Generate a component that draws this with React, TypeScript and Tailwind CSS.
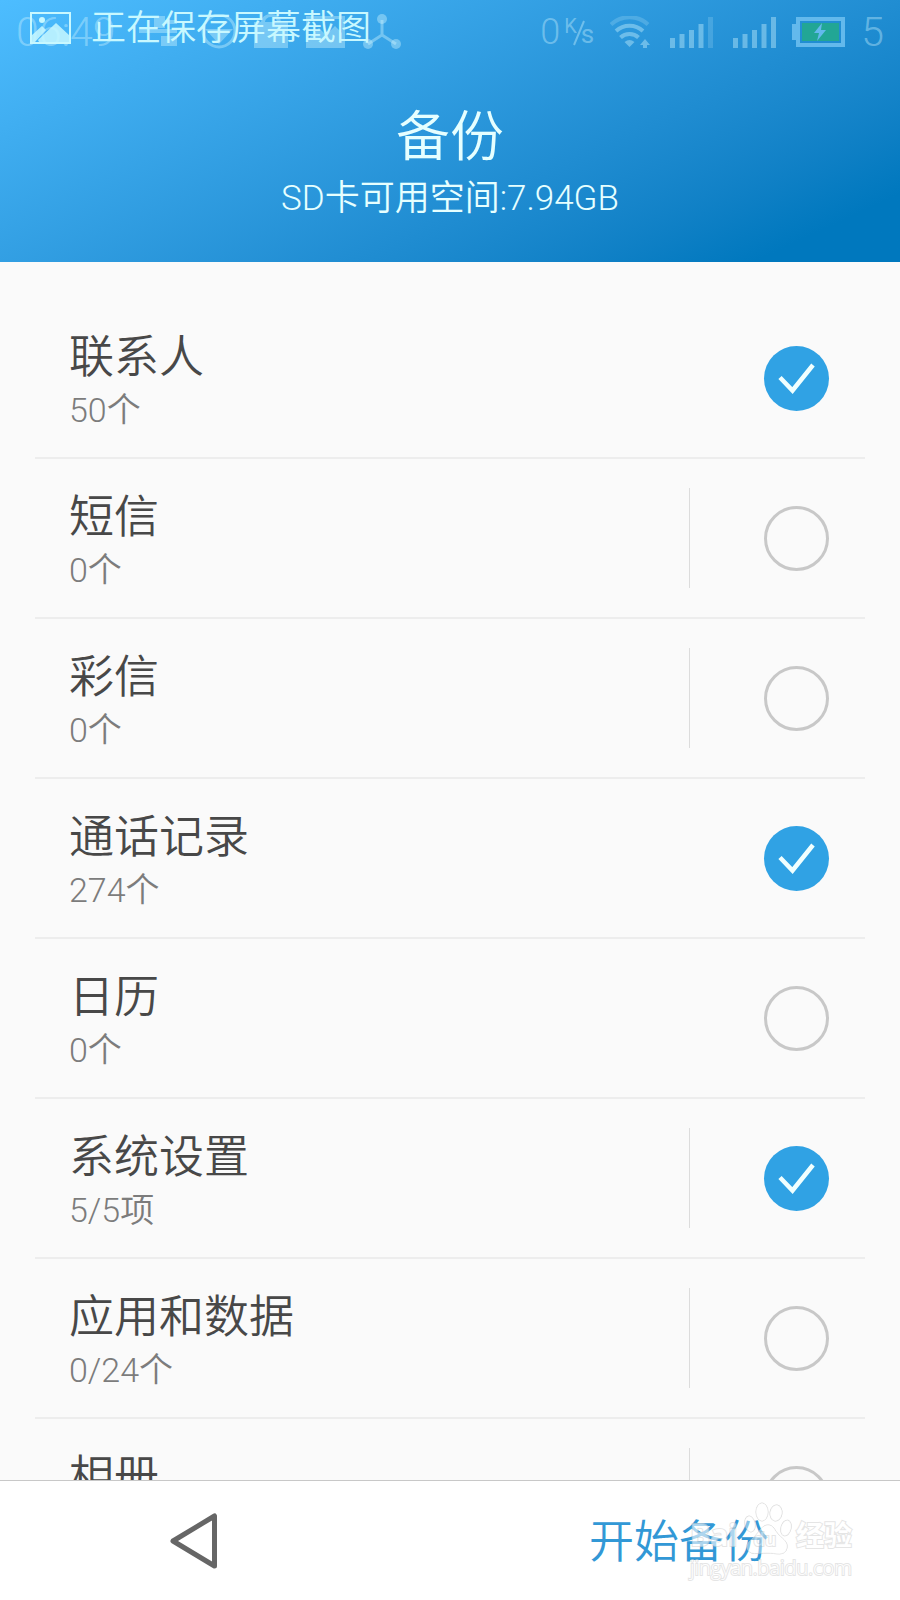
import { useState } from "react";

type Item = {
  id: string;
  title: string;
  detail: string;
  checked: boolean;
  divided: boolean;
};

const initialItems: Item[] = [
  { id: "contacts", title: "联系人", detail: "50个", checked: true, divided: false },
  { id: "sms", title: "短信", detail: "0个", checked: false, divided: true },
  { id: "mms", title: "彩信", detail: "0个", checked: false, divided: true },
  { id: "calls", title: "通话记录", detail: "274个", checked: true, divided: false },
  { id: "calendar", title: "日历", detail: "0个", checked: false, divided: false },
  { id: "settings", title: "系统设置", detail: "5/5项", checked: true, divided: true },
  { id: "apps", title: "应用和数据", detail: "0/24个", checked: false, divided: true },
  { id: "album", title: "相册", detail: "0个", checked: false, divided: true },
];

function NotificationIcons() {
  return (
    <svg viewBox="0 0 264 36" className="h-9 w-[264px]" fill="currentColor">
      {/* usb */}
      <path d="M15 2h11v4h12v4H26v4H15zM0 15h38v4H0zM22 22h16v10H22z" />
      {/* compass */}
      <circle cx="80" cy="17" r="16" fill="none" stroke="currentColor" strokeWidth="3" />
      <path d="M66 15h28L80 30z" />
      {/* bag */}
      <path d="M115 8h7a10 8 0 0 1 20 0h7v26h-34zM126 8h12a6 5 0 0 0-12 0z" fillRule="evenodd" />
      <path d="M167 2h39v32h-39zM170 5v19l10-10 7 7 9-9 7 7V5z" fillRule="evenodd" />
      {/* share nodes */}
      <path d="M243 6v15l-14 9M243 21l14 9" fill="none" stroke="currentColor" strokeWidth="3" />
      <circle cx="243" cy="5" r="5" />
      <circle cx="229" cy="30" r="5" />
      <circle cx="257" cy="30" r="5" />
    </svg>
  );
}

function WifiIcon() {
  return (
    <svg viewBox="0 0 40 32" className="h-8 w-10" fill="none" stroke="currentColor" strokeWidth="4">
      <path d="M1 8.500a27 27 0 0 1 37 0" opacity=".5" />
      <path d="M6 15a20 20 0 0 1 27 0" />
      <path d="M10.500 21.500a13 13 0 0 1 18 0" />
      <path d="M14.500 26q5-4 10 0l-5 5z" fill="currentColor" stroke="none" />
      <path d="M35 23l5 6h-3v3h-4v-3h-3z" fill="currentColor" stroke="none" />
    </svg>
  );
}

function SignalIcon({ full }: { full: boolean }) {
  return (
    <svg viewBox="0 0 43 31" className="h-[31px] w-[43px]" fill="currentColor">
      <path d="M0 21h5v10H0zM9.500 17h5v14h-5zM19 13h5v18h-5zM28.500 7h5v24h-5z" />
      <path d="M38 0h5v31h-5z" opacity={full ? 1 : 0.45} />
    </svg>
  );
}

function BatteryIcon() {
  return (
    <svg viewBox="0 0 53 30" className="h-[30px] w-[53px]">
      <path d="M4 0h49v30H4v-7H0V7h4zM8 4v22h41V4z" fill="#63b9ec" fillRule="evenodd" />
      <path d="M10 6h37v18H10z" fill="#22a695" />
      <path d="M30 6L22 16h5l-2 8 9-11h-5z" fill="#63b9ec" />
    </svg>
  );
}

function StatusBar() {
  return (
    <div className="relative flex h-[64px] items-center justify-between px-4 text-[#d0f4ff]/40">
      <div className="flex items-center">
        <span className="w-[123px] text-[41px] leading-none">06:49</span>
        <NotificationIcons />
      </div>
      <div className="flex items-center">
        <span className="text-[36px] leading-none">0</span>
        <span className="ml-1 flex h-8 items-start font-normal">
          <span className="text-[20px] leading-5">K</span>
          <svg viewBox="0 0 12 26" className="mt-1 -ml-1 h-[26px] w-3" stroke="currentColor" strokeWidth="2">
            <path d="M11 1L1 25" />
          </svg>
          <span className="-ml-1 self-end text-[26px] leading-7">s</span>
        </span>
        <span className="ml-4"><WifiIcon /></span>
        <span className="ml-5"><SignalIcon full={false} /></span>
        <span className="ml-5"><SignalIcon full /></span>
        <span className="ml-4"><BatteryIcon /></span>
        <span className="ml-4 text-[41px] leading-none">5</span>
      </div>

      {/* ticker slides over the regular icons */}
      <div className="absolute inset-y-0 left-[30px] flex items-center gap-5 pb-2 text-[#c8f8ff]">
        <svg viewBox="0 0 41 32" className="h-8 w-[41px]" fill="currentColor">
          <path d="M0 0h41v32H0zM2 2v28h37V2z" fillRule="evenodd" />
          <path d="M2 23l10-9 4 4L5 30H2zM9 30l-1-2 18-17 13 12v7z" opacity=".85" />
          <circle cx="12" cy="8" r="3" />
        </svg>
        <span className="text-[35px] leading-none">正在保存屏幕截图</span>
      </div>
    </div>
  );
}

function Row({ item, onToggle }: { item: Item; onToggle: () => void }) {
  return (
    <li className="mx-[35px] flex h-[160px] shrink-0 items-center border-b-2 border-[#ededed] pr-9 pl-[34px]">
      <label htmlFor={item.id} className="flex flex-1 flex-col pt-3">
        <span className="text-[45px] leading-[52px] text-[#484848]">{item.title}</span>
        <span className="text-[34px] leading-[52px] text-[#7c7c7c]">{item.detail}</span>
      </label>
      {item.divided && <div className="mr-[74px] h-[100px] w-px bg-[#dcdcdc]" />}
      <div className="relative size-[65px]">
        <input
          id={item.id}
          type="checkbox"
          checked={item.checked}
          onChange={onToggle}
          className="peer block size-full appearance-none rounded-full border-[3px] border-[#c8c8c8] checked:border-0 checked:bg-[#30a2e4]"
        />
        <svg
          viewBox="0 0 65 65"
          className="pointer-events-none absolute inset-0 hidden size-full peer-checked:block"
          fill="none"
          stroke="#f0ffff"
          strokeWidth="4.500"
        >
          <path d="M16 31.500l12.500 13L49 19" />
        </svg>
      </div>
    </li>
  );
}

function Watermark() {
  return (
    <div className="pointer-events-none absolute right-12 bottom-5 w-[162px] font-['Open_Sans','Noto_Sans_CJK_SC',sans-serif] text-white opacity-60 [-webkit-text-stroke:2px_#d4d4d4] [paint-order:stroke]">
      <svg viewBox="0 0 50 54" className="absolute -top-4 left-[54px] h-[54px] w-[50px]" fill="#ffffff" fillOpacity=".7" stroke="#bcbcbc">
        <ellipse cx="18" cy="10" rx="6" ry="9" />
        <ellipse cx="32" cy="11" rx="6" ry="8" transform="rotate(8 32 11)" />
        <ellipse cx="6" cy="22" rx="5" ry="8" transform="rotate(-12 6 22)" />
        <ellipse cx="42" cy="26" rx="5" ry="8" transform="rotate(14 42 26)" />
        <path d="M24 23c-6 0-8 6-13 11s-9 7-8 12c2 8 11 5 20 5s18 4 20-5c1-6-3-8-8-13s-5-10-11-10z" />
      </svg>
      <div className="relative flex items-baseline leading-[34px]">
        <span className="text-[30px] font-bold">Bai</span>
        <span className="ml-4 text-[18px] font-semibold">du</span>
        <span className="ml-auto text-[28px] font-bold">经验</span>
      </div>
      <div className="text-[20px] leading-6">jingyan.baidu.com</div>
    </div>
  );
}

export default function App() {
  const [items, setItems] = useState(initialItems);

  const toggle = (id: string) => {
    setItems(items.map((item) => (item.id === id ? { ...item, checked: !item.checked } : item)));
  };

  return (
    <div className="flex h-screen flex-col bg-[#fafafa] font-[Roboto,'Noto_Sans_CJK_SC',sans-serif] font-[350]">
      <header className="h-[262px] shrink-0 bg-linear-155 from-[#4dbdff] to-[#0078be] to-90%">
        <StatusBar />
        <div className="flex flex-col items-center pt-[38px] text-[#e6ffff]">
          <h1 className="text-[54px] leading-[72px] font-[350]">备份</h1>
          <p className="text-[35px] leading-[50px]">SD卡可用空间:7.94GB</p>
        </div>
      </header>

      <main className="min-h-0 flex-1 overflow-hidden pt-[37px]">
        <ul className="flex flex-col">
          {items.map((item) => (
            <Row key={item.id} item={item} onToggle={() => toggle(item.id)} />
          ))}
        </ul>
      </main>

      <footer className="relative flex h-[120px] shrink-0 items-center border-t border-[#c8c8c8] bg-white">
        <button aria-label="返回" className="flex h-full flex-1 items-center pl-[169px]">
          <svg viewBox="0 0 50 56" className="h-14 w-[50px]" fill="none" stroke="#666666" strokeWidth="5" strokeLinejoin="round">
            <path d="M4 28L45.500 3v50z" />
          </svg>
        </button>
        <button className="mr-[131px] pt-1 text-[45px] leading-[60px] text-[#3298d6]">开始备份</button>
        <Watermark />
      </footer>
    </div>
  );
}
